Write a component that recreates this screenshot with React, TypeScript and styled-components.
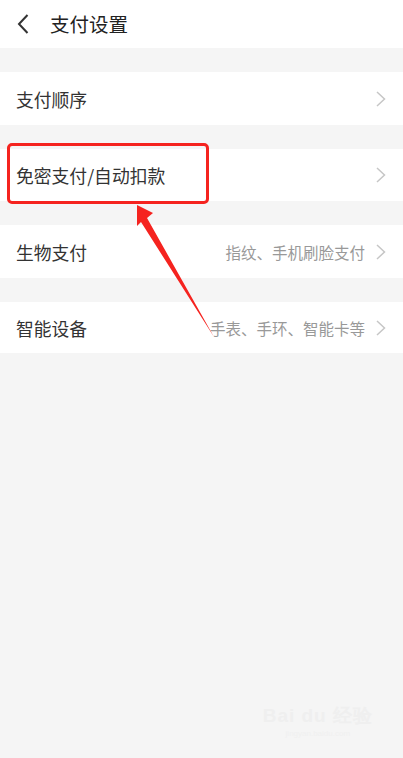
import React from "react";
import styled, { createGlobalStyle } from "styled-components";

const Global = createGlobalStyle`
  html, body { margin: 0; padding: 0; background: #f5f5f5; }
  body { font-family: "Noto Sans CJK SC", "Noto Sans", sans-serif; }
  * { box-sizing: border-box; }
`;

const Page = styled.div`
  position: relative;
  width: 403px;
  height: 758px;
  background: #f5f5f5;
  overflow: hidden;
`;

const Header = styled.header`
  height: 48px;
  background: #fff;
  display: flex;
  align-items: center;
  padding-left: 16px;
  gap: 20px;
`;

const Title = styled.h1`
  margin: 0;
  font-size: 19.5px;
  font-weight: 400;
  color: #222;
  line-height: 1;
`;

const List = styled.div`
  display: flex;
  flex-direction: column;
  gap: 24px;
  padding-top: 24px;
`;

const Row = styled.div<{ $h?: number }>`
  height: ${(p) => p.$h ?? 53}px;
  background: #fff;
  display: flex;
  align-items: center;
  padding: 0 16px;
`;

const Label = styled.span`
  font-size: 17.8px;
  color: #333;
  flex: 1;
`;

const Sub = styled.span`
  font-size: 15.5px;
  color: #999;
  margin-right: 10px;
`;

const Highlight = styled.div`
  position: absolute;
  left: 7px;
  top: 143px;
  width: 202px;
  height: 61px;
  border: 3px solid #f5231f;
  border-radius: 5px;
`;

const ArrowSvg = styled.svg`
  position: absolute;
  left: 0;
  top: 0;
`;

const Watermark = styled.div`
  position: absolute;
  right: 30px;
  bottom: 20px;
  display: flex;
  flex-direction: column;
  align-items: center;
  color: #efefef;
  font-family: "Liberation Sans", sans-serif;
`;

const WmTop = styled.div`
  font-size: 19px;
  font-weight: 700;
  letter-spacing: 1px;
`;

const WmBottom = styled.div`
  font-size: 8px;
  color: #f0f0f0;
`;

const Chevron = () => (
  <svg width="12" height="18" viewBox="0 0 12 18">
    <path d="M2 2 L9.5 9 L2 16" fill="none" stroke="#c6c6c6" strokeWidth="1.5" />
  </svg>
);

const Back = () => (
  <svg width="14" height="22" viewBox="0 0 14 22">
    <path d="M11.5 2 L3 11 L11.5 20" fill="none" stroke="#333" strokeWidth="2" />
  </svg>
);

export default function App() {
  return (
    <>
      <Global />
      <Page>
        <Header>
          <Back />
          <Title>支付设置</Title>
        </Header>
        <List>
          <Row>
            <Label>支付顺序</Label>
            <Chevron />
          </Row>
          <Row $h={52}>
            <Label>免密支付/自动扣款</Label>
            <Chevron />
          </Row>
          <Row>
            <Label>生物支付</Label>
            <Sub>指纹、手机刷脸支付</Sub>
            <Chevron />
          </Row>
          <Row $h={51}>
            <Label>智能设备</Label>
            <Sub>手表、手环、智能卡等</Sub>
            <Chevron />
          </Row>
        </List>
        <Highlight />
        <ArrowSvg width="403" height="758" viewBox="0 0 403 758">
          <polygon
            points="137,205 153,213 147,218 214,337 141,222 137,226"
            fill="#f5231f"
          />
        </ArrowSvg>
        <Watermark>
          <WmTop>Bai du 经验</WmTop>
          <WmBottom>jingyan.baidu.com</WmBottom>
        </Watermark>
      </Page>
    </>
  );
}
